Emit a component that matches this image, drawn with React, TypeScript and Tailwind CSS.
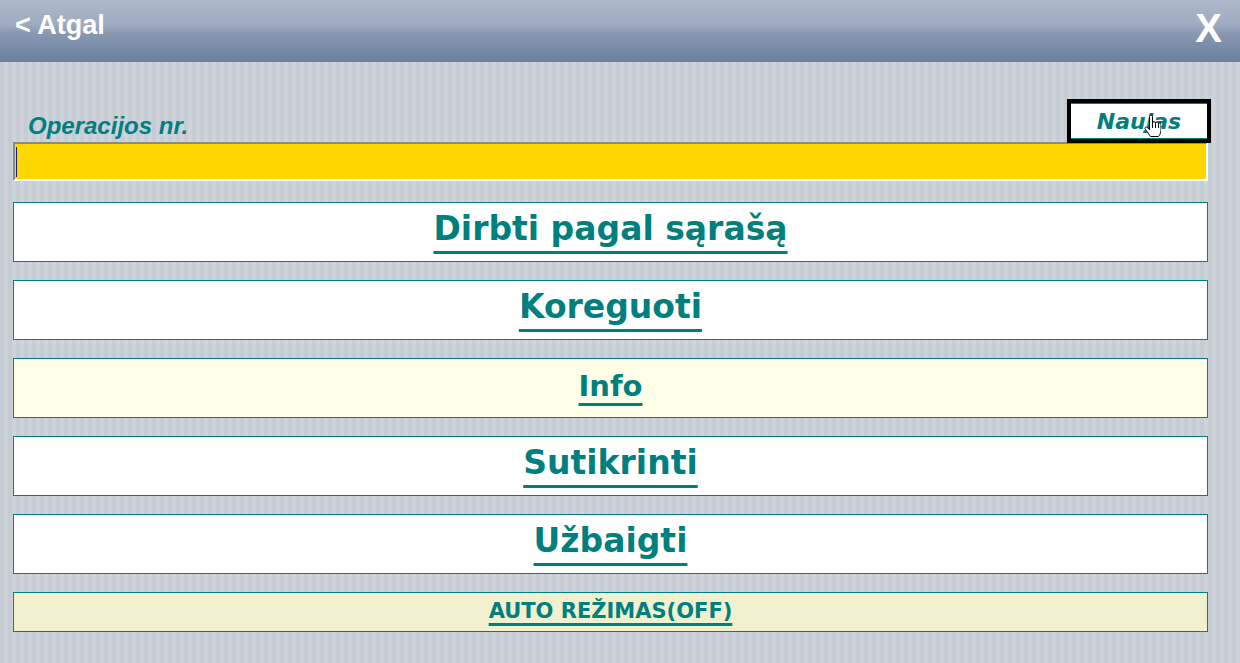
import React from 'react';

const teal = 'text-[#007f7f]';

const HandCursor: React.FC = () => (
  <svg
    className="absolute left-[73px] top-[11px]"
    width="17"
    height="24"
    viewBox="0 0 17 24"
  >
    <path
      d="M5.5 2.5a1.5 1.5 0 0 1 3 0V9a1.5 1.5 0 0 1 3 .3a1.5 1.5 0 0 1 3 .4a1.3 1.3 0 0 1 2.5.6V16c0 3-1.3 5-2.5 6.5H6.5L1.3 15.2a1.3 1.3 0 0 1 2-1.7l2.2 2.2Z"
      fill="#fff"
      stroke="#000"
      strokeWidth="1"
      strokeLinejoin="round"
    />
    <path d="M8.5 9v5M11.5 9.3v4.7M14.5 9.7v4.3" stroke="#000" strokeWidth="1" />
  </svg>
);

type Btn = {
  label: string;
  size: string;
  bg: string;
  h: string;
  shift: string;
  deco: string;
};

const buttons: Btn[] = [
  { label: 'Dirbti pagal sąrašą', size: 'text-[33px]', bg: 'bg-white', h: 'h-[60px]', shift: 'pb-[8px]', deco: 'underline-offset-[11px] decoration-[3px]' },
  { label: 'Koreguoti', size: 'text-[33px]', bg: 'bg-white', h: 'h-[60px]', shift: 'pb-[8px]', deco: 'underline-offset-[11px] decoration-[3px]' },
  { label: 'Info', size: 'text-[29px]', bg: 'bg-[#ffffe8]', h: 'h-[60px]', shift: 'pb-[4px]', deco: 'underline-offset-[7px] decoration-[3px]' },
  { label: 'Sutikrinti', size: 'text-[33px]', bg: 'bg-white', h: 'h-[60px]', shift: 'pb-[8px]', deco: 'underline-offset-[11px] decoration-[3px]' },
  { label: 'Užbaigti', size: 'text-[33px]', bg: 'bg-white', h: 'h-[60px]', shift: 'pb-[8px]', deco: 'underline-offset-[11px] decoration-[3px]' },
  { label: 'AUTO REŽIMAS(OFF)', size: 'text-[21px]', bg: 'bg-[#f1f0cf]', h: 'h-[40px]', shift: 'pb-[2px]', deco: 'underline-offset-[5px] decoration-[3px]' },
];

const App: React.FC = () => {
  return (
    <div className="min-h-screen w-full bg-[repeating-linear-gradient(90deg,#c6ccd4_0px,#c6ccd4_4px,#ced3da_4px,#ced3da_8px)]">
      <div className="flex h-[62px] items-start justify-between bg-[linear-gradient(180deg,#aeb9cb_0%,#9dabc0_40%,#8797b0_55%,#6b809f_100%)] pl-[15px] pr-[18px] font-['Liberation_Sans',Arial,sans-serif] font-bold text-white">
        <div className="pt-[10px] text-[27px] leading-[30px]">&lt; Atgal</div>
        <div className="mt-[8px] text-[40px] leading-[40px]">X</div>
      </div>

      <div className="pl-[13px] pr-[32px] pt-[37px]">
        <div className="flex h-[44px] items-start justify-between">
          <div className={`ml-[15px] mt-[13px] font-['Liberation_Sans',Arial,sans-serif] text-[24px] font-bold italic leading-[28px] ${teal}`}>
            Operacijos nr.
          </div>
          <div className="relative z-10 mr-[-3px] h-[44px] w-[144px] border-4 border-black">
            <div className={`flex h-full items-center justify-center border-y border-[#007f7f] bg-white font-['DejaVu_Sans',Verdana,sans-serif] text-[22px] font-bold italic ${teal}`}>
              Naujas
            </div>
            <HandCursor />
          </div>
        </div>

        <div className="-mt-px flex h-[39px] items-center border-2 border-b-white border-l-[#8a8a8a] border-r-white border-t-[#8a8a8a] bg-[#ffd700] pl-px">
          <span className="h-[30px] w-px bg-[#1c1c6a]" />
        </div>

        <div className="mt-[21px] flex flex-col gap-[18px]">
          {buttons.map((b) => (
            <div
              key={b.label}
              className={`flex ${b.h} items-center justify-center border border-[#007f7f] ${b.bg} ${b.shift}`}
            >
              <span
                className={`font-['DejaVu_Sans',Verdana,sans-serif] font-bold leading-none underline ${b.deco} ${b.size} ${teal}`}
              >
                {b.label}
              </span>
            </div>
          ))}
        </div>
      </div>
    </div>
  );
};

export default App;
